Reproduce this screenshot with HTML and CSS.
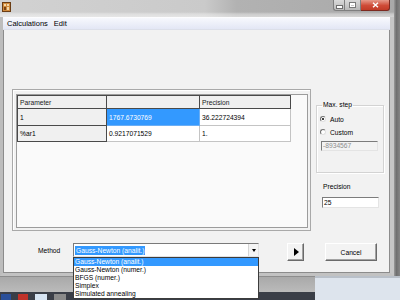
FILE: index.html
```html
<!DOCTYPE html>
<html>
<head>
<meta charset="utf-8">
<title>Calculations</title>
<link rel="stylesheet" href="styles.css">
</head>
<body>
<div class="screen">
  <div class="top">
    <div class="window">
      <div class="titlebar">
        <svg class="appicon" width="9" height="10" viewBox="0 0 9 10">
          <rect x="0.5" y="0.5" width="8" height="9" fill="#d08a3c" stroke="#6b3d14"/>
          <rect x="2" y="2" width="2" height="2" fill="#f3d7a8"/>
          <rect x="5" y="2" width="2" height="2" fill="#f3d7a8"/>
          <rect x="2" y="5" width="2" height="3" fill="#7a4316"/>
          <rect x="5" y="5" width="2" height="3" fill="#f3d7a8"/>
        </svg>
        <div class="caption-buttons">
          <span class="cb min"><span class="glyph-min"></span></span>
          <span class="cb max"><span class="glyph-max"></span></span>
          <span class="cb close">
            <svg width="7" height="6" viewBox="0 0 7 6"><path d="M1 0.8 L6 5.2 M6 0.8 L1 5.2" stroke="#fff" stroke-width="1.4"/></svg>
          </span>
        </div>
      </div>
      <div class="frame">
        <div class="menubar"><span>Calculations</span><span>Edit</span></div>
        <div class="client">
          <div class="main-row">
            <div class="grid-frame">
              <div class="grid">
                <div class="cell hdr first">Parameter</div>
                <div class="cell hdr"></div>
                <div class="cell hdr">Precision</div>
                <div class="cell rowhdr">1</div>
                <div class="cell data selected">1767.6730769</div>
                <div class="cell data">36.222724394</div>
                <div class="cell rowhdr">%ar1</div>
                <div class="cell data">0.9217071529</div>
                <div class="cell data">1.</div>
              </div>
            </div>
            <div class="side">
              <fieldset class="group">
                <legend>Max. step</legend>
                <div class="radio on"><span class="dot"></span>Auto</div>
                <div class="radio"><span class="dot"></span>Custom</div>
                <div class="field disabled">-8934567</div>
              </fieldset>
              <div class="side-label">Precision</div>
              <div class="field prec">25</div>
            </div>
          </div>
          <div class="bottom-row">
            <div class="label">Method</div>
            <div class="combo"><span class="sel">Gauss-Newton (analit.)</span><span class="arrow"><span class="tri-down"></span></span></div>
            <div class="btn play"><span class="tri"></span></div>
            <div class="btn cancel">Cancel</div>
          </div>
        </div>
      </div>
    </div>
    <div class="edge"></div>
  </div>
  <div class="desk">
    <div class="desk-left">
      <div class="taskbar">
        <span class="ti t1"></span><span class="ti t2"></span><span class="ti t3"></span><span class="ti t4"></span>
      </div>
    </div>
    <div class="desk-right"></div>
  </div>
</div>
<ul class="droplist">
  <li class="hl">Gauss-Newton (analit.)</li>
  <li>Gauss-Newton (numer.)</li>
  <li>BFGS (numer.)</li>
  <li>Simplex</li>
  <li>Simulated annealing</li>
</ul>
</body>
</html>
```

FILE: styles.css
```css
html, body {
  margin: 0;
  padding: 0;
  overflow: hidden;
}
body {
  width: 400px;
  height: 300px;
  position: relative;
  background: #dfe6ee;
  font-family: "Liberation Sans", Arial, sans-serif;
  font-size: 6.7px;
  color: #000;
}
.screen {
  display: flex;
  flex-direction: column;
  width: 400px;
  height: 300px;
}
.top {
  display: flex;
  height: 276px;
}
.window {
  width: 394px;
  height: 276px;
  display: flex;
  flex-direction: column;
}
.titlebar {
  height: 17px;
  display: flex;
  align-items: flex-start;
  background:
    linear-gradient(to bottom, rgba(255,255,255,0) 0, rgba(255,255,255,0) 12px, rgba(255,255,255,0.35) 14px, rgba(255,255,255,0.5) 17px),
    linear-gradient(to right, #d2d2d2 0%, #cacaca 52%, #b2b2b2 60%, #a9a9a9 100%);
}
.appicon {
  margin: 2px 0 0 2px;
}
.caption-buttons {
  margin-left: auto;
  margin-right: 4px;
  display: flex;
  height: 11px;
}
.cb {
  box-sizing: border-box;
  height: 11px;
  border: 1px solid #7f7f7f;
  border-top: none;
  display: flex;
  align-items: center;
  justify-content: center;
  background: linear-gradient(#d9d9d9, #b9b9b9);
}
.cb.min {
  width: 11px;
  border-right: none;
  border-radius: 0 0 0 3px;
}
.cb.max {
  width: 17px;
}
.cb.close {
  width: 29px;
  border-color: #7d2a20;
  border-left: none;
  border-radius: 0 0 3px 0;
  background: linear-gradient(#e69a8a, #cf4b37 55%, #c13b27);
}
.glyph-min {
  width: 5px;
  height: 2px;
  margin-top: 3px;
  background: #fff;
  box-shadow: 0 0 0 1px #6e6e6e;
}
.glyph-max {
  width: 5px;
  height: 4px;
  box-sizing: border-box;
  border: 1px solid #fff;
  border-top-width: 2px;
  box-shadow: 0 0 0 1px #7a7a7a;
}
.frame {
  flex: 1;
  display: flex;
  flex-direction: column;
  border-left: 3px solid #bdbdbd;
  border-right: 4px solid #c6c6c6;
  border-bottom: 3px solid #c2c2c2;
}
.menubar {
  height: 13px;
  box-sizing: border-box;
  display: flex;
  align-items: center;
  gap: 6px;
  padding-left: 4px;
  font-size: 7.5px;
  background: linear-gradient(#f7f8fd, #e3e7f5);
  border-top: 1px solid #fcfcfe;
  border-bottom: 1px solid #dcdfe9;
}
.client {
  height: 243px;
  box-sizing: border-box;
  border: 1px solid #8c8c8c;
  border-top: none;
  background: #f2f2f2;
  padding-top: 59px;
}
.main-row {
  display: flex;
  align-items: flex-start;
  margin-left: 8px;
}
.grid-frame {
  width: 299px;
  height: 142px;
  box-sizing: border-box;
  border: 1px solid #a9a9a9;
  box-shadow: inset 1px 1px #ffffff;
  padding: 4px 2px 2px 3px;
  display: flex;
}
.grid {
  flex: 1;
  background: #fafafa;
  border: 1px solid #9c9c9c;
  display: grid;
  grid-template-columns: 90px 93px 91px;
  grid-template-rows: 14px 17px 16px;
  align-content: start;
}
.cell {
  box-sizing: border-box;
  display: flex;
  align-items: center;
  padding-left: 2px;
  white-space: nowrap;
  overflow: hidden;
}
.hdr {
  background: #f0f0f0;
  border-top: 1px solid #4a4a4a;
  border-right: 1px solid #4a4a4a;
  border-bottom: 1px solid #4a4a4a;
  color: #1a1a1a;
}
.hdr.first, .rowhdr {
  border-left: 1px solid #4a4a4a;
}
.rowhdr {
  background: #f0f0f0;
  border-right: 1px solid #4a4a4a;
  border-bottom: 1px solid #4a4a4a;
}
.data {
  background: #ffffff;
  border-right: 1px solid #c4c4c4;
  border-bottom: 1px solid #c4c4c4;
}
.data.selected {
  background: #3399ff;
  color: #ffffff;
  border-color: #6aaef5;
}
.side {
  margin-left: 5px;
  width: 68px;
  display: flex;
  flex-direction: column;
}
.group {
  margin: 12px 0 0 0;
  padding: 6px 3px 0 3px;
  box-sizing: border-box;
  height: 72px;
  border: 1px solid #d3d3d3;
  box-shadow: 1px 1px #ffffff, inset 1px 1px #ffffff;
  min-width: 0;
}
.group legend {
  padding: 0 1px;
  margin-left: 2px;
  line-height: 8px;
  font-size: 6.7px;
}
.radio {
  display: flex;
  align-items: center;
  gap: 4px;
  height: 8px;
  margin-bottom: 5px;
}
.dot {
  width: 6px;
  height: 6px;
  box-sizing: border-box;
  border-radius: 50%;
  border: 1px solid;
  border-color: #6f6f6f #e0e0e0 #e0e0e0 #6f6f6f;
  background: #fff;
  display: flex;
  align-items: center;
  justify-content: center;
}
.radio.on .dot::after {
  content: "";
  width: 2px;
  height: 2px;
  border-radius: 50%;
  background: #000;
}
.field {
  width: 57px;
  height: 10px;
  box-sizing: border-box;
  border: 1px solid;
  border-color: #7c7c7c #e4e4e4 #e4e4e4 #7c7c7c;
  background: #fff;
  line-height: 8px;
  padding-left: 1px;
  margin-left: 1px;
}
.field.disabled {
  background: #f3f3f3;
  color: #8e8e8e;
  margin-top: 1px;
}
.side-label {
  margin: 10px 0 0 7px;
  line-height: 8px;
}
.field.prec {
  margin: 6px 0 0 6px;
  height: 11px;
  line-height: 9px;
}
.bottom-row {
  display: flex;
  align-items: flex-start;
  margin-top: 12px;
  margin-left: 34px;
}
.label {
  width: 35px;
  height: 14px;
  line-height: 15px;
}
.combo {
  width: 186px;
  height: 14px;
  box-sizing: border-box;
  border: 1px solid;
  border-color: #7a7a7a #e2e2e2 #e2e2e2 #7a7a7a;
  background: #fff;
  display: flex;
  align-items: center;
  padding-left: 1px;
}
.sel {
  background: #3399ff;
  color: #fff;
  line-height: 9px;
  padding: 0 1px;
}
.arrow {
  margin-left: auto;
  width: 10px;
  height: 12px;
  box-sizing: border-box;
  border-left: 1px solid #d6d6d6;
  background: #f4f4f4;
  display: flex;
  align-items: center;
  justify-content: center;
}
.tri-down {
  width: 0;
  height: 0;
  border-left: 2.5px solid transparent;
  border-right: 2.5px solid transparent;
  border-top: 3px solid #000;
}
.btn {
  height: 18px;
  box-sizing: border-box;
  border: 1px solid;
  border-color: #ffffff #6a6a6a #6a6a6a #ffffff;
  box-shadow: inset -1px -1px #a3a3a3;
  background: #f3f3f3;
  display: flex;
  align-items: center;
  justify-content: center;
}
.btn.play {
  width: 17px;
  margin-left: 28px;
}
.tri {
  width: 0;
  height: 0;
  border-top: 4.5px solid transparent;
  border-bottom: 4.5px solid transparent;
  border-left: 5px solid #000;
  margin-left: 1px;
}
.btn.cancel {
  width: 52px;
  margin-left: 21px;
}
.edge {
  width: 6px;
  background: linear-gradient(to right, #9a9a9a, #6f6f6f 40%, #858585);
}
.desk {
  display: flex;
  height: 24px;
}
.desk-left {
  width: 315px;
  display: flex;
  flex-direction: column;
  background: linear-gradient(#a9a9a9, #c4c4c4);
  border-top: 1px solid #8d8d8d;
  box-sizing: border-box;
}
.taskbar {
  margin-top: auto;
  height: 8px;
  background: #3a3e47;
  display: flex;
  gap: 7px;
  padding-left: 1px;
  align-items: flex-end;
}
.ti {
  width: 10px;
  height: 6px;
}
.t1 { background: #2a4f9a; }
.t2 { background: #c0322a; }
.t3 { background: #d6e4f2; width: 12px; }
.t4 { background: #8a8a8a; width: 12px; }
.desk-right {
  flex: 1;
  background: #dde4ed;
  border-top: 2px solid #b9c0c9;
}
.droplist {
  position: absolute;
  left: 73px;
  top: 257px;
  width: 186px;
  box-sizing: border-box;
  margin: 0;
  padding: 0;
  list-style: none;
  background: #fff;
  border: 1px solid #3c3c3c;
}
.droplist li {
  height: 8px;
  line-height: 8px;
  padding-left: 1px;
  white-space: nowrap;
}
.droplist li.hl {
  background: #3399ff;
  color: #fff;
}
```
